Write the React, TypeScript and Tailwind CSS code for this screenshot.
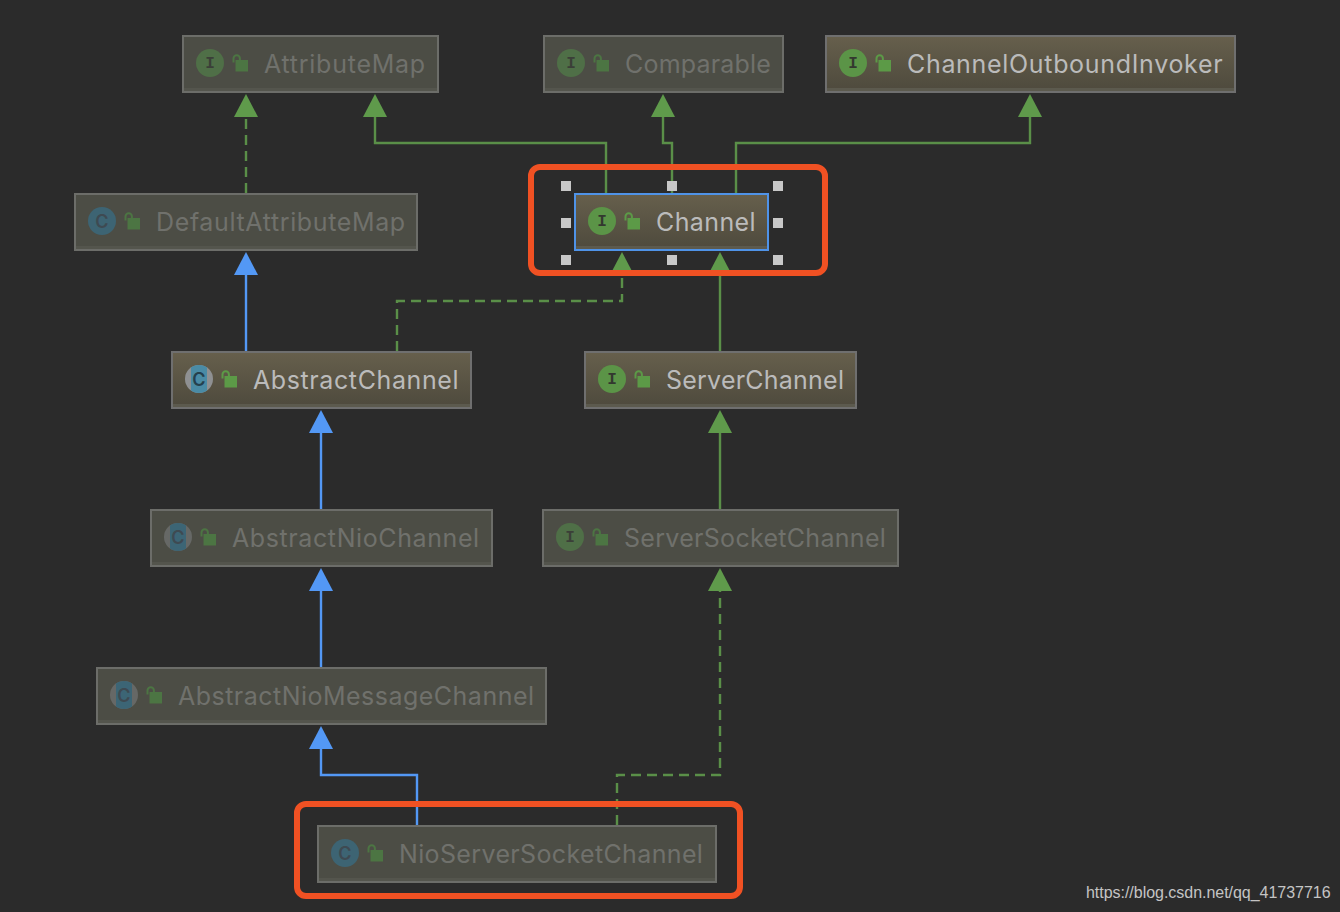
type Kind = "interface" | "class" | "abstract"

interface NodeProps {
  name: string
  kind: Kind
  dim?: boolean
  selected?: boolean
  className: string
}

function Lock({ dim }: { dim?: boolean }) {
  const color = dim ? "#4c7543" : "#5c9a47"
  return (
    <svg width="16" height="18" viewBox="0 0 16 18" className="shrink-0">
      <rect x="3.5" y="6" width="12.5" height="11.5" fill={color} />
      <path d="M1.5 8.5 V4.5 A3.2 3.2 0 0 1 7.9 4.5 V6" fill="none" stroke={color} strokeWidth="2" />
    </svg>
  )
}

function KindIcon({ kind, dim }: { kind: Kind; dim?: boolean }) {
  if (kind === "interface") {
    return (
      <span
        className={`flex h-7 w-7 shrink-0 items-center justify-center rounded-full pt-[2px] font-['Liberation_Mono',monospace] text-[16px] font-bold tracking-normal ${
          dim ? "bg-[#4f6f47] text-[#3b3f38]" : "bg-[#5b9447] text-[#33382f]"
        }`}
      >
        I
      </span>
    )
  }
  if (kind === "class") {
    return (
      <span className="flex h-7 w-7 shrink-0 items-center justify-center rounded-full bg-[#3d6473] font-['Inter',sans-serif] text-[18px] font-semibold tracking-normal text-[#3e4a52]">
        C
      </span>
    )
  }
  return (
    <span
      className={`relative flex h-7 w-7 shrink-0 items-center justify-center overflow-hidden rounded-full ${
        dim ? "bg-[#666866]" : "bg-[#8f9092]"
      }`}
    >
      <span className={`absolute inset-y-0 left-[6px] w-4 ${dim ? "bg-[#3c6575]" : "bg-[#4a8ba5]"}`} />
      <span
        className={`relative font-['Inter',sans-serif] text-[18px] font-semibold tracking-normal ${
          dim ? "text-[#3e4a52]" : "text-[#25404e]"
        }`}
      >
        C
      </span>
    </span>
  )
}

function ClassNode({ name, kind, dim, selected, className }: NodeProps) {
  return (
    <div
      className={`absolute flex h-[58px] items-center border-2 pb-[2px] pl-3 font-['Inter',sans-serif] text-[25px] ${
        selected
          ? "border-[#4f93e8] bg-gradient-to-b from-[#665f4c] to-[#4e4a3d] text-[#bbbbbb] shadow-[inset_0_-3px_0_#5c5a4e]"
          : dim
            ? "border-[#6c6d69] bg-[#4c4d45] text-[#70716c] shadow-[inset_0_-3px_0_#54554d]"
            : "border-[#6f6f6f] bg-gradient-to-b from-[#665f4c] to-[#4e4a3d] text-[#bbbbbb] shadow-[inset_0_-3px_0_#5c5a4e]"
      } ${className}`}
    >
      <KindIcon kind={kind} dim={dim} />
      <span className="ml-2 shrink-0">
        <Lock dim={dim} />
      </span>
      <span className="ml-4 mt-[2px] whitespace-nowrap leading-none">{name}</span>
    </div>
  )
}

const GREEN = "#5a8f48"
const BLUE = "#5398f5"

function Edge({ d, color, dashed, tip }: { d: string; color: string; dashed?: boolean; tip: [number, number] }) {
  const [x, y] = tip
  return (
    <g>
      <path d={d} fill="none" stroke={color} strokeWidth="2.4" strokeDasharray={dashed ? "10 6" : undefined} />
      <polygon points={`${x},${y} ${x + 12},${y + 23} ${x - 12},${y + 23}`} fill={color === GREEN ? "#5f9a4b" : BLUE} />
    </g>
  )
}

function Handle({ className }: { className: string }) {
  return <div className={`absolute h-[10px] w-[10px] bg-[#c8c8c8] ${className}`} />
}

export default function App() {
  return (
    <div className="relative h-[912px] w-[1340px] overflow-hidden bg-[#2b2b2b]">
      <svg width="1340" height="912" className="absolute left-0 top-0">
        <Edge d="M246 193 V117" color={GREEN} dashed tip={[246, 94]} />
        <Edge d="M606 193 V143 H375 V117" color={GREEN} tip={[375, 94]} />
        <Edge d="M672 193 V143 H663 V117" color={GREEN} tip={[663, 94]} />
        <Edge d="M736 193 V143 H1030 V117" color={GREEN} tip={[1030, 94]} />
        <Edge d="M246 351 V275" color={BLUE} tip={[246, 252]} />
        <Edge d="M397 351 V301 H622 V275" color={GREEN} dashed tip={[622, 252]} />
        <Edge d="M720 351 V275" color={GREEN} tip={[720, 252]} />
        <Edge d="M321 509 V433" color={BLUE} tip={[321, 410]} />
        <Edge d="M720 509 V433" color={GREEN} tip={[720, 410]} />
        <Edge d="M321 667 V591" color={BLUE} tip={[321, 568]} />
        <Edge d="M417 825 V775 H321 V749" color={BLUE} tip={[321, 726]} />
        <Edge d="M617 825 V775 H720 V591" color={GREEN} dashed tip={[720, 568]} />
      </svg>

      <ClassNode name="AttributeMap" kind="interface" dim className="left-[182px] top-[35px] w-[257px] tracking-[0.75px]" />
      <ClassNode name="Comparable" kind="interface" dim className="left-[543px] top-[35px] w-[241px] tracking-[0.2px]" />
      <ClassNode name="ChannelOutboundInvoker" kind="interface" className="left-[825px] top-[35px] w-[411px] tracking-[0.68px]" />
      <ClassNode name="DefaultAttributeMap" kind="class" dim className="left-[74px] top-[193px] w-[344px] tracking-[0.63px]" />
      <ClassNode name="Channel" kind="interface" selected className="left-[574px] top-[193px] w-[195px] tracking-[0.4px]" />
      <ClassNode name="AbstractChannel" kind="abstract" className="left-[171px] top-[351px] w-[301px] tracking-[0.6px]" />
      <ClassNode name="ServerChannel" kind="interface" className="left-[584px] top-[351px] w-[273px] tracking-[0.23px]" />
      <ClassNode name="AbstractNioChannel" kind="abstract" dim className="left-[150px] top-[509px] w-[343px] tracking-[0.6px]" />
      <ClassNode name="ServerSocketChannel" kind="interface" dim className="left-[542px] top-[509px] w-[357px] tracking-[0.3px]" />
      <ClassNode name="AbstractNioMessageChannel" kind="abstract" dim className="left-[96px] top-[667px] w-[451px] tracking-[0.48px]" />
      <ClassNode name="NioServerSocketChannel" kind="class" dim className="left-[317px] top-[825px] w-[400px] tracking-[0.36px]" />

      <Handle className="left-[561px] top-[181px]" />
      <Handle className="left-[667px] top-[181px]" />
      <Handle className="left-[773px] top-[181px]" />
      <Handle className="left-[561px] top-[218px]" />
      <Handle className="left-[773px] top-[218px]" />
      <Handle className="left-[561px] top-[255px]" />
      <Handle className="left-[667px] top-[255px]" />
      <Handle className="left-[773px] top-[255px]" />

      {/* red annotation boxes */}
      <div className="absolute left-[528px] top-[164px] h-[112px] w-[300px] rounded-[12px] border-[6px] border-[#f05123]" />
      <div className="absolute left-[294px] top-[801px] h-[98px] w-[449px] rounded-[12px] border-[6px] border-[#f05123]" />

      <div className="absolute left-[1086px] top-[884px] whitespace-nowrap font-['Liberation_Sans',sans-serif] text-[16px] leading-[18px] tracking-[-0.03px] text-[#c4c4c4]">
        https://blog.csdn.net/qq_41737716
      </div>
    </div>
  )
}
